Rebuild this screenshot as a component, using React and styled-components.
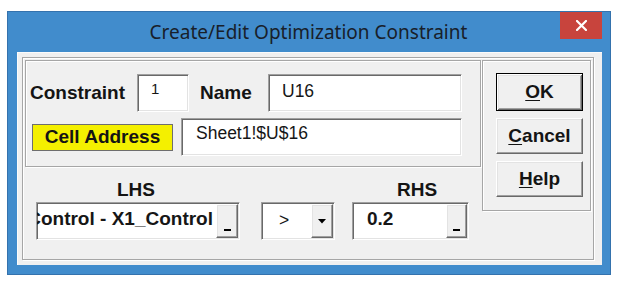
import React from "react";
import styled, { createGlobalStyle } from "styled-components";

const Global = createGlobalStyle`
  html, body { margin: 0; padding: 0; background: #ffffff; }
  body { font-family: "Liberation Sans", Arial, sans-serif; }
`;

const Window = styled.div`
  margin: 11px 0 0 7px;
  width: 604px;
  height: 264px;
  box-sizing: border-box;
  background: #418ccc;
  border: 1px solid #3472ad;
  display: flex;
  flex-direction: column;
`;

const TitleBar = styled.div`
  height: 40px;
  flex: none;
  display: grid;
  grid-template-columns: 1fr auto 1fr;
  padding: 0 8px 0 7px;
`;

const Title = styled.div`
  grid-column: 2;
  align-self: center;
  margin-top: -1px;
  font-family: "Noto Sans", "Open Sans", sans-serif;
  font-size: 19px;
  color: #18202a;
  white-space: nowrap;
`;

const Close = styled.div`
  grid-column: 3;
  justify-self: end;
  width: 42px;
  height: 27px;
  background: #c8443d;
  display: flex;
  align-items: center;
  justify-content: center;
`;

const Client = styled.div`
  flex: 1;
  margin: 0 8px 9px 9px;
  background: #f0f0f0;
  box-shadow: inset 1px 1px 0 #fbfbfb;
  padding: 5px 8px 5px 5px;
  display: flex;
  box-sizing: border-box;
`;

const Frame = styled.div`
  flex: 1;
  border: 1px solid #a6a6a6;
  box-shadow: inset 1px 1px 0 #ffffff, 1px 1px 0 #ffffff;
  padding: 2px;
  display: flex;
  gap: 1px;
`;

const LeftCol = styled.div`
  width: 456px;
  display: flex;
  flex-direction: column;
`;

const Group = styled.div`
  box-sizing: border-box;
  border: 1px solid #a6a6a6;
  box-shadow: inset 1px 1px 0 #ffffff, 1px 1px 0 #ffffff;
  width: ${(p) => p.$w}px;
  height: ${(p) => p.$h}px;
  padding: ${(p) => p.$pad};
  display: flex;
  flex-direction: column;
  gap: ${(p) => p.$gap}px;
  align-self: flex-start;
`;

const Row = styled.div`
  display: flex;
  align-items: center;
  height: 38px;
`;

const Label = styled.div`
  box-sizing: border-box;
  width: ${(p) => p.$w}px;
  padding-left: ${(p) => p.$pl || 0}px;
  font-size: 19px;
  font-weight: bold;
  line-height: 22px;
  color: #141414;
  white-space: nowrap;
`;

const YellowLabel = styled.div`
  box-sizing: border-box;
  margin-left: 2px;
  margin-right: 8px;
  width: 141px;
  height: 27px;
  background: #f4f000;
  border: 1px solid #6e6e6e;
  display: flex;
  align-items: center;
  justify-content: center;
  font-size: 19px;
  font-weight: bold;
  color: #141414;
`;

const Field = styled.div`
  box-sizing: border-box;
  width: ${(p) => p.$w}px;
  height: 38px;
  background: #ffffff;
  border-style: solid;
  border-width: 1px;
  border-color: #a0a0a0 #ffffff #ffffff #a0a0a0;
  box-shadow: inset 1px 1px 0 #696969, inset -1px -1px 0 #e3e3e3;
  display: flex;
  overflow: hidden;
`;

const FieldText = styled.div`
  flex: 1;
  min-width: 0;
  overflow: hidden;
  display: flex;
  justify-content: ${(p) => (p.$right ? "flex-end" : "flex-start")};
  align-items: flex-start;
  padding: ${(p) => p.$top}px ${(p) => p.$pr || 0}px 0 ${(p) => p.$pl}px;
  font-size: ${(p) => p.$size}px;
  font-weight: ${(p) => (p.$bold ? "bold" : "normal")};
  line-height: ${(p) => p.$lh}px;
  color: #161616;
  white-space: nowrap;
`;

const Bevel = styled.div`
  box-sizing: border-box;
  flex: none;
  width: ${(p) => p.$w}px;
  margin: 1px 1px 1px 0;
  background: #f0f0f0;
  border-style: solid;
  border-width: 1px;
  border-color: #ffffff #696969 #696969 #ffffff;
  box-shadow: inset -1px -1px 0 #a0a0a0, inset 1px 1px 0 #e3e3e3;
  display: flex;
  flex-direction: column;
  align-items: center;
  justify-content: ${(p) => (p.$arrow ? "center" : "flex-end")};
  padding-bottom: ${(p) => (p.$arrow ? 0 : 6)}px;
`;

const Bar = styled.span`
  display: block;
  width: 7px;
  height: 2px;
  background: #000000;
`;

const Bottom = styled.div`
  display: flex;
  align-items: flex-end;
  padding: 12px 0 0 11px;
`;

const Column = styled.div`
  display: flex;
  flex-direction: column;
  margin-left: ${(p) => p.$ml || 0}px;
`;

const ColLabel = styled.div`
  text-align: center;
  padding: 0 ${(p) => p.$pr || 0}px 0 ${(p) => p.$pl || 0}px;
  margin-bottom: 1px;
  font-size: 19px;
  font-weight: bold;
  line-height: 22px;
  color: #141414;
`;

const Buttons = styled(Group)`
  gap: 7px;
`;

const PushButton = styled.div`
  box-sizing: border-box;
  width: 87px;
  height: ${(p) => (p.$def ? 38 : 36)}px;
  background: #f0f0f0;
  border-style: solid;
  border-width: 1px;
  border-color: ${(p) =>
    p.$def ? "#000000" : "#ffffff #696969 #696969 #ffffff"};
  box-shadow: ${(p) =>
    p.$def
      ? "inset 1px 1px 0 #ffffff, inset -1px -1px 0 #696969, inset 2px 2px 0 #e3e3e3, inset -2px -2px 0 #a0a0a0"
      : "inset -1px -1px 0 #a0a0a0, inset 1px 1px 0 #e3e3e3"};
  display: flex;
  align-items: center;
  justify-content: center;
  font-size: 19px;
  font-weight: bold;
  color: #141414;
  u { text-underline-offset: 2px; }
`;

const XIcon = () => (
  <svg width="11" height="11" viewBox="0 0 11 11">
    <path d="M1 1 L10 10 M10 1 L1 10" stroke="#ffffff" strokeWidth="2.2" strokeLinecap="square" fill="none" />
  </svg>
);

const Arrow = () => (
  <svg width="8" height="5" viewBox="0 0 8 5">
    <polygon points="0,0 8,0 4,4.5" fill="#000000" />
  </svg>
);

export default function App() {
  return (
    <>
      <Global />
      <Window>
        <TitleBar>
          <Title>Create/Edit Optimization Constraint</Title>
          <Close>
            <XIcon />
          </Close>
        </TitleBar>
        <Client>
          <Frame>
            <LeftCol>
              <Group $w={456} $h={107} $pad="13px 0 0 4px" $gap={6}>
                <Row>
                  <Label $w={107}>Constraint</Label>
                  <Field $w={52}>
                    <FieldText $size={15} $lh={17} $top={5} $pl={13}>1</FieldText>
                  </Field>
                  <Label $w={79} $pl={11}>Name</Label>
                  <Field $w={194}>
                    <FieldText $size={17.5} $lh={20} $top={6} $pl={13}>U16</FieldText>
                  </Field>
                </Row>
                <Row>
                  <YellowLabel>Cell Address</YellowLabel>
                  <Field $w={281}>
                    <FieldText $size={17.5} $lh={20} $top={4} $pl={14}>Sheet1!$U$16</FieldText>
                  </Field>
                </Row>
              </Group>
              <Bottom>
                <Column>
                  <ColLabel $pr={4}>LHS</ColLabel>
                  <Field $w={204}>
                    <FieldText $right $bold $size={19} $lh={22} $top={5} $pl={0} $pr={3}>
                      Control - X1_Control
                    </FieldText>
                    <Bevel $w={22}>
                      <Bar />
                    </Bevel>
                  </Field>
                </Column>
                <Column $ml={21}>
                  <Field $w={74}>
                    <FieldText $size={17.5} $lh={20} $top={7} $pl={17}>&gt;</FieldText>
                    <Bevel $w={22} $arrow>
                      <Arrow />
                    </Bevel>
                  </Field>
                </Column>
                <Column $ml={17}>
                  <ColLabel $pl={13}>RHS</ColLabel>
                  <Field $w={117}>
                    <FieldText $bold $size={19} $lh={22} $top={5} $pl={14}>0.2</FieldText>
                    <Bevel $w={21}>
                      <Bar />
                    </Bevel>
                  </Field>
                </Column>
              </Bottom>
            </LeftCol>
            <Buttons $w={109} $h={151} $pad="12px 0 0 13px" $gap={7}>
              <PushButton $def>
                <span><u>O</u>K</span>
              </PushButton>
              <PushButton>
                <span><u>C</u>ancel</span>
              </PushButton>
              <PushButton>
                <span><u>H</u>elp</span>
              </PushButton>
            </Buttons>
          </Frame>
        </Client>
      </Window>
    </>
  );
}
